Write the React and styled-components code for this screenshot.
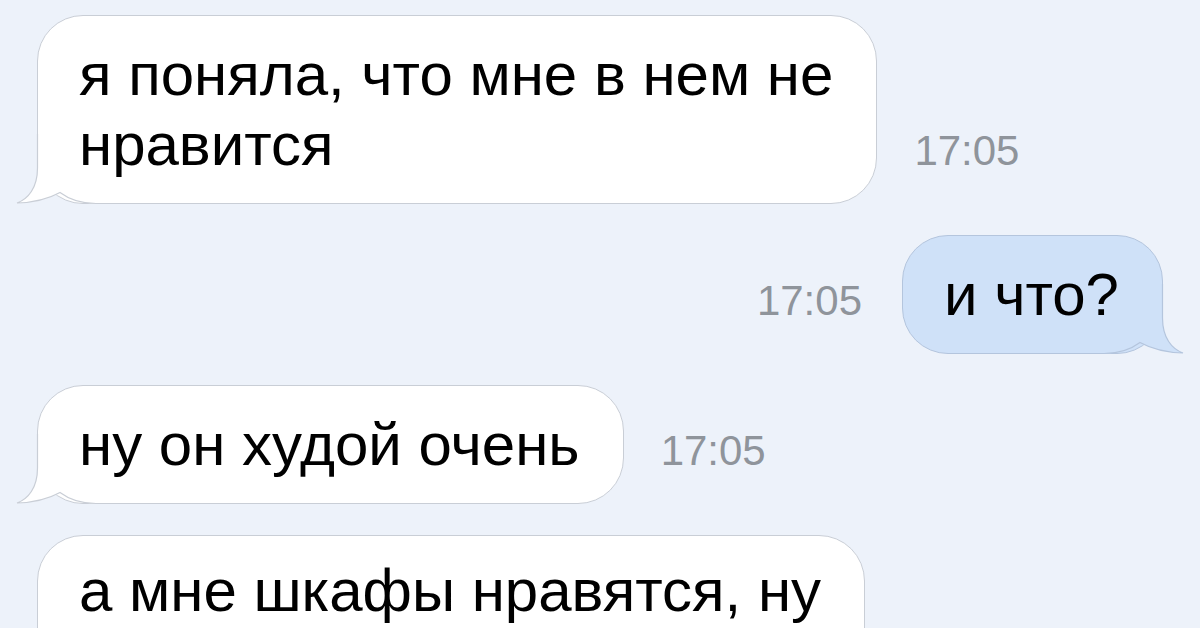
import React from 'react';
import styled, { createGlobalStyle, css } from 'styled-components';

const GlobalStyle = createGlobalStyle`
  html, body {
    margin: 0;
    padding: 0;
    overflow: hidden;
    background: #edf2fa;
  }
  body {
    font-family: 'Liberation Sans', Arial, sans-serif;
    -webkit-font-smoothing: antialiased;
  }
`;

const Chat = styled.div`
  display: flex;
  flex-direction: column;
  gap: 31px;
  padding: 15px 37px;
  height: 628px;
  box-sizing: border-box;
  overflow: hidden;
`;

const Row = styled.div`
  display: flex;
  align-items: last baseline;
  justify-content: ${(p) => (p.out ? 'flex-end' : 'flex-start')};
  gap: ${(p) => (p.out ? '40px' : '37px')};
`;

const Bubble = styled.div`
  position: relative;
  box-sizing: border-box;
  padding: ${(p) => p.padTop || 24}px 43px 23px 41px;
  border-radius: 46px;
  border: 1px solid ${(p) => (p.out ? '#b4c5dd' : '#c9ced6')};
  background: ${(p) => (p.out ? '#cfe1f8' : '#ffffff')};
  color: #000;
  font-size: 60px;
  line-height: 70px;
  white-space: pre-line;
  ${(p) =>
    p.minHeight &&
    css`
      min-height: ${p.minHeight}px;
    `}
`;

const BubbleText = styled.span`
  position: relative;
  z-index: 1;
`;

const Time = styled.span`
  font-size: 42px;
  color: #8f949b;
  white-space: nowrap;
`;

const TailSvg = styled.svg`
  position: absolute;
  bottom: -1px;
  width: 80px;
  height: 70px;
  overflow: visible;
  ${(p) =>
    p.out
      ? css`
          right: -22px;
          transform: scaleX(-1);
        `
      : css`
          left: -22px;
        `}
`;

const Tail = ({ out }) => {
  const fill = out ? '#cfe1f8' : '#ffffff';
  const stroke = out ? '#b4c5dd' : '#c9ced6';
  return (
    <TailSvg out={out} viewBox="0 0 80 70">
      <path
        d="M21.5 0 L21.5 34 C21.5 54 12 65 1 69 C19 68.5 33 64.5 44 58.5 C54 66 64 69.5 80 69.5 L80 0 Z"
        fill={fill}
      />
      <path
        d="M21.5 0 L21.5 34 C21.5 54 12 65 1 69 C19 68.5 33 64.5 44 58.5 C54 66 64 69.5 80 69.5"
        fill="none"
        stroke={stroke}
        strokeWidth="1.2"
      />
    </TailSvg>
  );
};

const messages = [
  { id: 1, text: 'я поняла, что мне в нем не\nнравится', time: '17:05', tail: true },
  { id: 2, text: 'и что?', time: '17:05', out: true, tail: true },
  { id: 3, text: 'ну он худой очень', time: '17:05', tail: true },
  { id: 4, text: 'а мне шкафы нравятся, ну', minHeight: 200, padTop: 20 },
];

const App = () => (
  <>
    <GlobalStyle />
    <Chat>
      {messages.map((m) => (
        <Row key={m.id} out={m.out}>
          {m.out && <Time>{m.time}</Time>}
          <Bubble out={m.out} minHeight={m.minHeight} padTop={m.padTop}>
            <BubbleText>{m.text}</BubbleText>
            {m.tail && <Tail out={m.out} />}
          </Bubble>
          {!m.out && m.time && <Time>{m.time}</Time>}
        </Row>
      ))}
    </Chat>
  </>
);

export default App;
